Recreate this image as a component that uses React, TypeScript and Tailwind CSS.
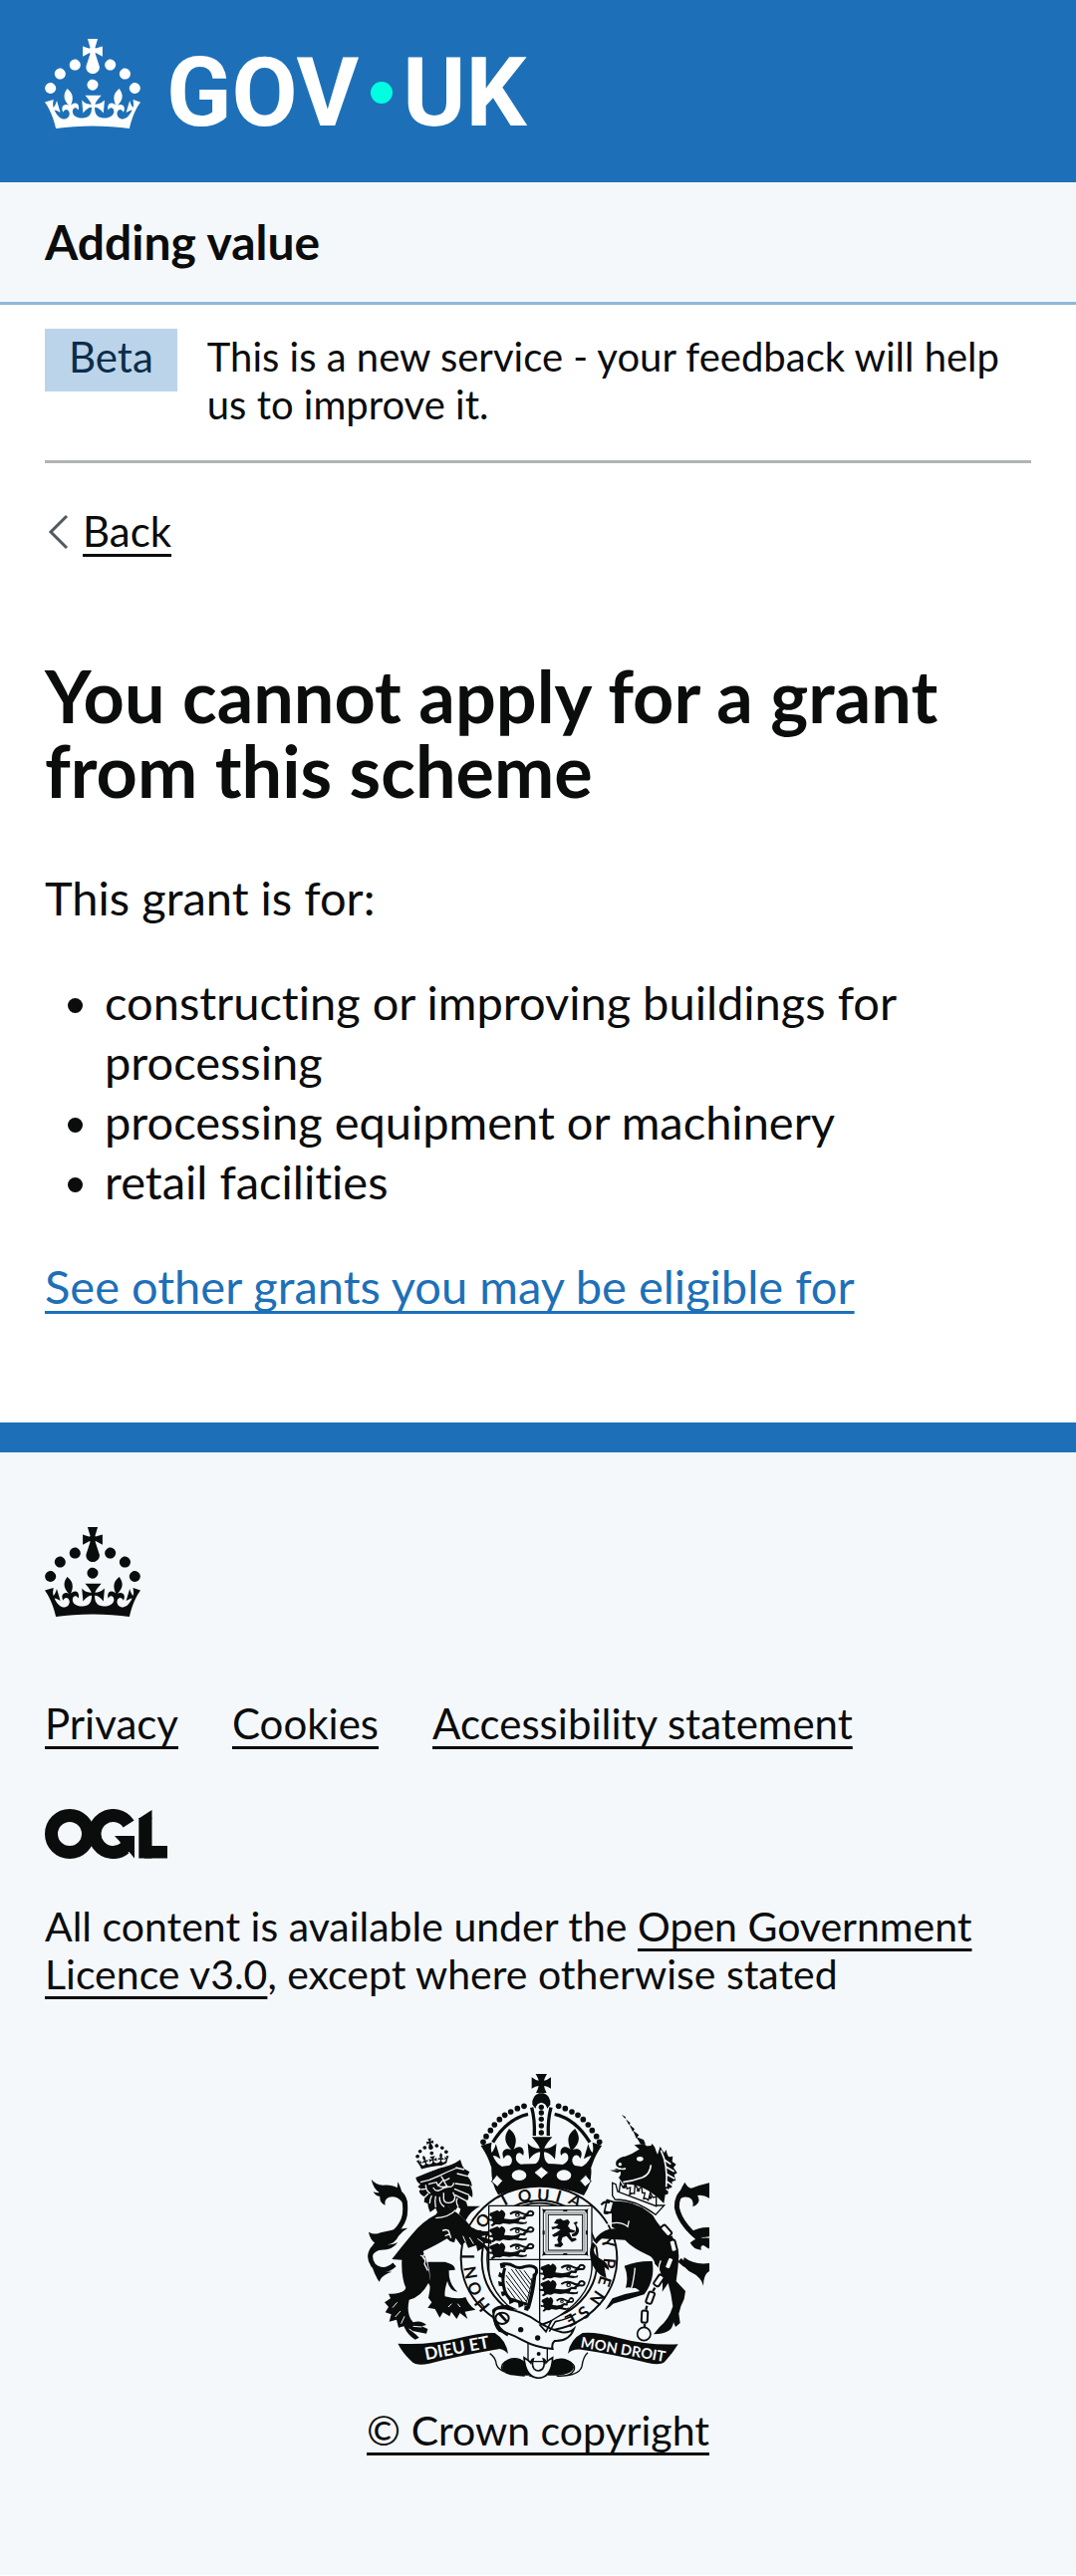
import type { ReactNode } from "react";

const CROWN_BASE =
  "M16 29.2c4.4 0 8.6.3 12.3.8 1.1-4.5 2.4-7 3.7-8.8l-2.5-.9c.2 1.3.3 1.9 0 2.7-.4-.4-.8-1.1-1.1-2.3l-1.2 4c.7-.5 1.3-.8 2-.9-1.1 2.5-2.6 3.1-3.5 3-1.1-.2-1.7-1.2-1.5-2.1.3-1.2 1.5-1.5 2.1-.1 1.1-2.3-.8-3-2-2.3 1.9-1.9 2.1-3.5.6-5.6-2.1 1.6-2.1 3.2-1.2 5.5-1.2-1.4-3.2-.6-2.5 1.6.9-1.4 2.1-.5 1.9.8-.2 1.1-1.7 2.1-3.5 1.9-2.7-.2-2.9-2.1-2.9-3.6.7-.1 1.9.5 2.9 1.9l.4-4.3c-1.1 1.1-2.1 1.4-3.2 1.4.4-1.2 2.1-3 2.1-3h-5.4s1.7 1.9 2.1 3c-1.1 0-2.1-.2-3.2-1.4l.4 4.3c1-1.4 2.2-2 2.9-1.9-.1 1.5-.2 3.4-2.9 3.6-1.9.2-3.4-.8-3.5-1.9-.2-1.3 1-2.2 1.9-.8.7-2.3-1.2-3-2.5-1.6.9-2.2.9-3.9-1.2-5.5-1.5 2-1.3 3.7.6 5.6-1.2-.7-3.1 0-2 2.3.6-1.4 1.8-1.1 2.1.1.2.9-.3 1.9-1.5 2.1-.9.2-2.4-.5-3.5-3 .6 0 1.2.3 2 .9l-1.2-4c-.3 1.1-.7 1.9-1.1 2.3-.3-.8-.2-1.4 0-2.7l-2.9.9C1.3 23 2.6 25.5 3.7 30c3.7-.5 7.9-.8 12.3-.8z";
const CROWN_TOP =
  "M22.6 10.4c-1 .4-2-.1-2.4-1-.4-.9.1-2 1-2.4.9-.4 2 .1 2.4 1s-.1 2-1 2.4m-5.9 6.7c-.9.4-2-.1-2.4-1-.4-.9.1-2 1-2.4.9-.4 2 .1 2.4 1s-.1 2-1 2.4m10.8-3.7c-1 .4-2-.1-2.4-1-.4-.9.1-2 1-2.4.9-.4 2 .1 2.4 1s0 2-1 2.4m3.3 4.8c-1 .4-2-.1-2.4-1-.4-.9.1-2 1-2.4.9-.4 2 .1 2.4 1s-.1 2-1 2.4M17 4.7l2.3 1.2V2.5l-2.3.7-.2-.2.9-3h-3.4l.9 3-.2.2c-.1.1-2.3-.7-2.3-.7v3.4L15 4.7c.1.1.1.2.2.2l-1.3 4c-.1.2-.1.4-.1.6 0 1.1.8 2 1.9 2.2h.7c1-.2 1.9-1.1 1.9-2.1 0-.2 0-.4-.1-.6l-1.3-4c-.1-.2 0-.2.1-.3m-7.6 5.7c.9.4 2-.1 2.4-1 .4-.9-.1-2-1-2.4-.9-.4-2 .1-2.4 1s0 2 1 2.4m-5 3c.9.4 2-.1 2.4-1 .4-.9-.1-2-1-2.4-.9-.4-2 .1-2.4 1s.1 2 1 2.4m-3.2 4.8c.9.4 2-.1 2.4-1 .4-.9-.1-2-1-2.4-.9-.4-2 .1-2.4 1s0 2 1 2.4";

function Crown() {
  return (
    <svg viewBox="0 0 32 30" className="block h-[90px] w-[96px]" fill="currentColor" aria-hidden="true">
      <path d={CROWN_TOP} />
      <path d={CROWN_BASE} />
    </svg>
  );
}

function LicenceLogo() {
  return (
    <svg viewBox="0 0 123 50" className="block h-[50px] w-[123px]" fill="currentColor" role="img" aria-label="OGL">
      <g fill="none" stroke="currentColor" strokeWidth="13">
        <circle cx="25" cy="25" r="18.5" />
        <path d="M84.1 15a18.5 18.5 0 1 0-3.9 24.4" />
      </g>
      <path d="M70 27h20v22.5l-5.5-6.5-6 3-2-9-1-4z" />
      <path d="M94.3 9.5 107.5 1v9H94.3z" />
      <rect x="94.3" y="9" width="13.2" height="40.5" />
      <rect x="100" y="37" width="23" height="12.5" />
    </svg>
  );
}

const INK = "#0b0c0c";
const PAPER = "#f4f8fb";

const ARCH_PEARLS: [number, number][] = [
  [52, 163], [72, 170], [92, 180], [110, 190], [126, 203], [141, 219], [153, 236], [166, 254], [175, 271],
];

const MOTTO: [string, number, number, number][] = [
  ["H", 402, 760, -130], ["O", 380, 712, -115], ["N", 368, 664, -100], ["I", 362, 616, -90],
  ["S", 386, 546, -68], ["O", 405, 508, -56], ["T", 468, 445, -28],
  ["Q", 530, 434, -12], ["U", 586, 432, 4], ["I", 632, 436, 16], ["A", 682, 448, 30],
  ["Y", 780, 574, 74], ["P", 784, 636, 94], ["E", 770, 690, 108], ["N", 748, 740, 124],
  ["S", 708, 784, 140], ["E", 668, 806, 152],
];

const BELT_PATH =
  "M436 790q2-22 30-18 60 8 100 38 40 26 76 34 22 2 36-10-14 38-58 36-10 8-6 24-50-4-90-26-40-22-70-28-16-16-18-50z";

function PassantLion({ x, y }: { x: number; y: number }) {
  return (
    <g transform={`translate(${x} ${y})`}>
      <path d="M12-2l6 5 6-6 8 5 4 8-4 14 20 2q18 0 28-8l18 2-3 6-14-1-6 8 18 2 8-3-2 7-14 2-22-3-16 2-18-2-10 4-12-1-10 6-6-3 8-7-2-6-12-1-3-6 12 1 1-6-8-6 2-6z" />
      <path d="M50 10q16-12 34-3t22-4q8-5 14 3 0 10-12 8-8-1-18 5" fill="none" stroke={INK} strokeWidth="6" />
      <circle cx="72" cy="12" r="7" />
      <circle cx="72" cy="13" r="3" fill={PAPER} />
    </g>
  );
}

function ChainLink({ x, y, r }: { x: number; y: number; r: number }) {
  return (
    <g transform={`translate(${x} ${y}) rotate(${r})`}>
      <rect x="-9" y="-18" width="18" height="36" rx="6" fill={PAPER} stroke={INK} strokeWidth="6" />
    </g>
  );
}

function Garter() {
  return (
    <g>
      <ellipse cx="573" cy="622" rx="235" ry="218" fill={PAPER} stroke={INK} strokeWidth="6" />
      <ellipse cx="575" cy="625" rx="174" ry="178" fill={PAPER} stroke={INK} strokeWidth="6" />
      <ellipse cx="575" cy="625" rx="158" ry="170" fill="none" stroke={INK} strokeWidth="5" />
      {MOTTO.map(([ch, x, y, r]) => (
        <g key={ch + x} transform={`translate(${x} ${y}) rotate(${r})`}>
          <text y="17" textAnchor="middle" fontSize="50" fontFamily="Lato, sans-serif" fontWeight="700">
            {ch}
          </text>
        </g>
      ))}
    </g>
  );
}

function Shield() {
  return (
    <g>
      <path
        d="M422 463h310v190q-6 104-157 174Q424 752 422 650z"
        fill={PAPER}
        stroke={INK}
        strokeWidth="4"
      />
      <path d="M575 463v362M422 625h310" stroke={INK} strokeWidth="4" />
      <PassantLion x={436} y={478} />
      <PassantLion x={436} y={527} />
      <PassantLion x={436} y={577} />
      <PassantLion x={590} y={640} />
      <PassantLion x={590} y={689} />
      <g transform="translate(590 740) scale(.72 .9)">
        <PassantLion x={0} y={0} />
      </g>
      <g fill="none" stroke={INK}>
        <rect x="586" y="476" width="132" height="134" strokeWidth="3" />
        <rect x="594" y="484" width="116" height="118" stroke="#a9adb0" strokeWidth="6" />
        <rect x="601" y="490" width="103" height="107" strokeWidth="3" />
      </g>
      <path d="M582 472l12 4-6 10zM722 472l-12 4 6 10zM582 614l12-4-6-10zM722 614l-12-4 6-10zM646 474h12v6h-12zM646 606h12v6h-12zM584 538h6v12h-6zM714 538h6v12h-6z" />
      <path d="M626 504l12-2 8 6 14-4 6 8-6 12 8 10 14 4-4 6-14 0 8 16 12 0 2 6-14 6-6-6-10-12-12 4-4 12 6 10-8 8-18-2 0-7 12-2-4-12 4-12-14 4-6-6 14-8 12-8-14-4-10 4-4-8 14-2 8-6-14-4z" />
      <path d="M672 548q14-4 12-18t-8-14q10-10 14-2-10 6 2 16 4 10-2 18-6 10-18 6z" />
      <g fill="none" stroke={INK}>
        <path d="M456 642q24-8 40 2t34 2q24-6 34 6 6 14-8 24" strokeWidth="9" />
        <path d="M470 650q-8 24-4 52t20 42l52 16" strokeWidth="9" />
        <path d="M560 668q-4 50-20 104" strokeWidth="11" />
        <path d="M552 680q-6 50-22 84" strokeWidth="3" />
        <path
          d="M480 662l62 84M490 654l54 74M502 654l44 60M514 656l34 44M528 658l22 30M474 672l60 78M474 690l48 60M478 710l30 42"
          strokeWidth="3"
        />
      </g>
      <path d="M454 662l12 8-2 12-14-6zM450 690l14 4 2 12-14-2zM458 722l14-2 6 10-16 6zM482 744l14-2 4 10-16 8zM510 756l14-4 2 12-14 6zM456 636l14-2 2 14-14 4zM530 764l16 2-6 14-12-4z" />
    </g>
  );
}

function Belt() {
  return (
    <g>
      <path
        d="M425 908q18 12 20 34 10 28 85 33l-8-4q-50 6-62-20 0-18 30-27 24-4 36 10l18 41q24 10 50 0l20-42q20-14 44-4 28 12 20 30-12 20-52 16 66 2 76-28 4-30 18-42"
        fill={PAPER}
        stroke={INK}
        strokeWidth="4"
      />
      <path d="M462 950q2-22 34-26 22-2 32 8l14 42q-74 2-80-24zM678 950q-2-22-34-26-22-2-32 8l-14 42q74 2 80-24z" />
      <path d="M540 876v56h58v-56z" fill={PAPER} stroke={INK} strokeWidth="4" />
      <path
        d="M528 920q14 8 20 16 2-10 8-12-6 20 2 30 12 12 26 0 8-10 2-30 6 2 8 12 8-10 20-16-2 58-42 62-40-2-44-62z"
        fill={PAPER}
        stroke={INK}
        strokeWidth="5"
      />
      <path d={BELT_PATH} fill={PAPER} stroke={INK} strokeWidth="6" />
      <path d="M432 796q0-24 30-24l48 4-30-14q-34-2-48 14z" />
      <path d="M438 800q10 36 42 52" fill="none" stroke={INK} strokeWidth="10" />
      <ellipse cx="462" cy="802" rx="20" ry="17" fill={PAPER} stroke={INK} strokeWidth="6" />
      <path d="M452 786l24 26" stroke={INK} strokeWidth="8" />
      <path d="M576 822l34-12-16 32zM604 842l18-30q40-8 62-24" fill="none" stroke={INK} strokeWidth="5" />
      <circle cx="518" cy="836" r="8" />
      <circle cx="569" cy="861" r="8" />
      <circle cx="572" cy="909" r="6" />
    </g>
  );
}

function RoyalCrown() {
  return (
    <g>
      {ARCH_PEARLS.map(([dx, y]) => (
        <g key={dx}>
          <circle cx={580 - dx} cy={y} r="8.5" />
          <circle cx={580 + dx} cy={y} r="8.5" />
        </g>
      ))}
      <path d="M540 187Q476 202 434 272M620 187Q684 202 726 272" fill="none" stroke={INK} strokeWidth="10" />
      <path d="M563 66h34q-8 14-9 20 10-1 21-10v34q-11-8-21-8 1 8 8 21h-32q7-13 8-21-10 0-21 8V76q11 9 21 10-1-6-9-20z" />
      <path d="M553 158q-2-26 20-34h14q22 8 20 34l-9 12q-4-16-18-18-14 2-18 18z" />
      <path d="M546 168l10-2q10 40 8 86h-10q2-50-8-84zM614 168l-10-2q-10 40-8 86h10q-2-50 8-84z" />
      {[166, 183, 202, 222, 243].map((y) => (
        <circle key={y} cx="580" cy={y} r="8" />
      ))}
      <g transform="translate(397.6 40.5) scale(11.4)">
        <path d={CROWN_BASE} />
      </g>
      <path d="M430 350Q580 322 730 350q4 44-22 82-128-54-258-2-22-36-20-80z" />
      <path
        d="M580 345l22 18-22 19-22-19zM446 370l18 18-16 18-18-16zM714 370l-18 18 16 18 18-16z"
        fill={PAPER}
        stroke={INK}
        strokeWidth="3"
      />
      <ellipse cx="513" cy="371" rx="22" ry="16" fill={PAPER} />
      <ellipse cx="648" cy="371" rx="22" ry="16" fill={PAPER} />
    </g>
  );
}

function LionSupporter() {
  return (
    <g>
      <path d="M340 464h56q-30 14-44 44l-20-20z" />
      <path d="M138 640q-34 30-64 2-28-40 30-76 66-36 66-90 2-46-24-54" fill="none" stroke={INK} strokeWidth="15" />
      <path d="M68 383q12 16 36 18 26-2 42 8l2-18q10 20 12 32 20 20 16 44l-22-22q-12-12-32-8-16 6-12 24-18-8-16-26-14-2-20-14 12 4 18 2-18-12-24-40zM60 542q18 10 36 2 42-12 82-14-18 10-28 24-10 22-34 26 20 0 32-8-14 24-50 24-14 0-26 14-6-20 6-36-14-10-18-32zM70 646q18 16 60 16-30 8-38 30-12-16-22-46z" />
      <path d="M262 490q-40 20-74 62-30 36-58 72l30 2q-2 54 12 84-6 18-52 18l6 14-18 12 12 14-10 16 18 6-6 22 22-6 6 24 16-4q12 28 34 40l12-6-20-20 42 8 4-14-18-8 14-4q-16-16-40-8-22-24-12-68 36-8 58-50l8 14q-4-58-24-110 32-14 72-38 8 10 22 12l4-14 16 22 14-10 8 18 24-8 4 18 20-12 10 16 4-14-20-16 28 4v-12l-34-12 28-2-2-12q-30 2-52-12-28-36-60-54l-22-18z" />
      <path d="M238 632h52q32 8 30 24l-18 2q-2 40 26 64-24-2-31-32-10 30-7 46 40 10 62 2 10 26 30 38l-32 6 8 22-23-18-10 18-16-22-5 14-20-12-10 16-14-26-22-4 12-16-10-14q12-50-2-108z" />
      <path d="M202 378Q240 362 270 350Q310 344 336 324L342 342L348 352L364 361L357 374Q370 386 371 404L366 402Q376 422 372 438L360 428Q362 442 358 446L352 446L358 464L346 480L328 466L318 484L298 464L290 498Q276 496 268 486L262 470L245 482Q238 468 238 456L227 452L229 436Q214 430 212 418L219 413L208 406L216 398Q204 392 202 378Z" />
      <path
        d="M216 392q26-4 54-18t58-26M240 398l24-6 6 12M278 374l10 14 16-8M284 386l-14 16q10 8 26 2l-10-16M254 408q10 16 24 6t28-8q10-2 10-12M286 424v18q2 14 18 12t16-18l-6-14M232 400q0 20 14 26M320 396l44 6M318 412l44 18M320 430l34 18M326 366l32 8M322 348l26 6M232 412l-14 2M240 426l-12 12M250 432q-6 12-6 24M262 434q-4 16 0 34M274 436q-2 20 14 30M328 440q-8 10 2 26M262 500q40-2 60-24M282 538q20-8 22 10l-14 6M300 536l8 24M216 612q20 8 12 26l10 20M240 604q-24 8-12 20"
        fill="none"
        stroke={PAPER}
        strokeWidth="4"
      />
      <path
        d="M352 572l-8-18M376 578l-12-20M404 574l-16-12M132 770l14-16M140 798l16-18M158 818l10-22M202 848l-20-14M220 828l-26-2M300 768l10-10M336 768l-8-10"
        fill="none"
        stroke={PAPER}
        strokeWidth="3"
      />
      <g transform="translate(194 268) rotate(-9) scale(3.1 2.9)">
        <path d={CROWN_TOP} />
        <path d={CROWN_BASE} />
      </g>
      <path d="M214 364q46-6 90-32" fill="none" stroke={PAPER} strokeWidth="4" />
    </g>
  );
}

function UnicornSupporter() {
  return (
    <g>
      <path d="M822 188l12 8-2 5zM834 202l14 12-4 6zM845 218l16 14-6 8zM856 236l18 14-8 10zM866 256l22 8 6 14-16-2z" />
      <path d="M860 280l28-4 24 18-4 10-22-2z" />
      <path d="M912 276q10 6 14 24l4 8 8-24q6 12 12 20l6-10q2 16 8 22l12-2-2 16 12 8-8 10 11 16-9 6 5 16-11 4-1 18-9 2-3 18-8 2-4 26q-30-32-70-50-30-10-52-8l-14-20q10-10 4-20l-18-6 22-2q-20-2-16-20 8-14 28-16 20-6 40-20 20-12 38-12z" />
      <path
        d="M940 296q22 44 16 110M950 324l20 14M956 346l24 14M958 368l24 14M958 390l20 14M956 412l14 10M826 392q30-4 58-14 24-10 26-38M806 348q16 8 28 2"
        fill="none"
        stroke={PAPER}
        strokeWidth="5"
      />
      <ellipse cx="877" cy="322" rx="10" ry="7" fill={PAPER} />
      <circle cx="817" cy="338" r="5" fill={PAPER} />
      <path d="M786 356l40-2-16 10z" />
      <path d="M794 394l10 4 6 22q60 0 116 42l24 0-26 28q-60-46-122-46l-8-12z" fill={PAPER} stroke={INK} strokeWidth="4" />
      <path d="M814 422l4-28 8 14 8-12 4 16 10-4-2 22q8-6 14-4l2-26 10 14 10-8 2 18 8 0-4 18q8-2 14 4l6-22 8 14 10-2 0 28z" fill={PAPER} stroke={INK} strokeWidth="4" />
      <circle cx="830" cy="406" r="5" />
      <circle cx="872" cy="416" r="5" />
      <circle cx="908" cy="438" r="5" />
      <path d="M792 450q64-6 112 32l12 10q16 30 40 50 38 34 38 72-2 40-8 76l28 30-4 24q-12 22-16 44l4 28-14 12-6-14q-4 36-60 36l18-22q28-22 40-62-4-36-14-70l-18 26q6-60-22-84-4-20-20-26-48-22-70-46l-70-4q-20 16-24 34 2 18 22 28 22 10 24 34l-14-10 6 34q-40-18-48-62-8-36 20-64 24-26 56-24-12-4-12-8z" />
      <path d="M830 644q40-16 84-14 10 54-24 100-58 18-94 28-10 12-24 18l22-34q40-16 82-22-14-14-22-8-10-6-20-2 10-34-4-66z" />
      <path d="M850 716q8-24 12-66M776 520q40-14 64 6l4-18M940 628q-10 20-4 40M736 570l28 30" fill="none" stroke={PAPER} strokeWidth="4" />
      <path d="M778 446l20 6-8 32-20-4z" fill={PAPER} stroke={INK} strokeWidth="5" />
      <path d="M760 460q12-14 26-6M768 484q14 6 26-6" fill="none" stroke={INK} strokeWidth="6" />
      <path d="M1088 586Q1000 530 988 468q0-38 22-50M996 626q40 40 92 26M1040 574q20-12 48 12" fill="none" stroke={INK} strokeWidth="15" />
      <path d="M1012 392q8 16 20 18 28-10 54-16v46q-20-12-36-8 14 22-14 34 4-22-12-28-18-6-28 8-10-12 16-54zM1086 528q-30-2-58 14 14 4 20 14 14 4 38 0zM1086 560q-34-4-58 14 10 22 34 22-8-20 24-12zM1010 618q30 24 76 18v24q-18 10-18 44-8-28-32-38-34-14-26-48z" />
      <ChainLink x={956} y={538} r={-42} />
      <ChainLink x={977} y={584} r={-14} />
      <ChainLink x={965} y={636} r={22} />
      <ChainLink x={934} y={688} r={34} />
      <ChainLink x={908} y={740} r={20} />
      <ChainLink x={891} y={797} r={3} />
      <circle cx="889" cy="849" r="20" fill={PAPER} stroke={INK} strokeWidth="5" />
      <path d="M970 554l6 12M974 606l-4 10M952 658l-6 10M922 710l-6 10M898 764l-3 12M891 818v10" stroke={INK} strokeWidth="7" />
    </g>
  );
}

function MottoRibbons() {
  return (
    <g>
      <path d="M148 878q92 6 182-16 70-18 110-16 35 22 40 64-8-12-25-16-120 20-212 44-40 8-53-6-28-26-42-54z" />
      <path d="M992 880q-92 4-182-20-66-18-106-14-38 20-44 62 14-14 40-12 100 14 200 40 42 10 54-6 22-24 38-50z" />
      <g fill={PAPER} fontFamily="Lato, sans-serif" fontWeight="700" textAnchor="middle">
        <g transform="translate(329 909) rotate(-11)">
          <text fontSize="52">DIEU ET</text>
        </g>
        <g transform="translate(824 911) rotate(10)">
          <text fontSize="44">MON DROIT</text>
        </g>
      </g>
    </g>
  );
}

function RoyalArms() {
  return (
    <svg viewBox="54 66 1032 918" className="block h-[306px] w-[344px]" fill={INK} aria-hidden="true">
      <Garter />
      <Shield />
      <RoyalCrown />
      <UnicornSupporter />
      <LionSupporter />
      <Belt />
      <MottoRibbons />
    </svg>
  );
}

function TextLink({ children }: { children: ReactNode }) {
  return (
    <a href="#" className="underline decoration-[3px] underline-offset-[7px] [text-decoration-skip-ink:none]">
      {children}
    </a>
  );
}

export default function App() {
  return (
    <div className="bg-[#f4f8fb] font-[Lato,sans-serif] text-[41px] leading-12 text-[#0b0c0c] [font-variant-ligatures:none]">
      <header>
        <div className="bg-[#1d70b8] px-[45px] pt-[39px] pb-[54px] text-white">
          <a href="#" aria-label="GOV.UK" className="flex h-[90px] items-center">
            <Crown />
            <span className="flex items-center pt-[18px] pl-[26px] font-[Roboto,sans-serif] text-[96px] leading-[90px] font-bold">
              GOV
              <span className="mr-2.5 ml-3 size-[22px] rounded-full bg-[#00ffe0]" />
              UK
            </span>
          </a>
        </div>
        <div className="border-b-3 border-[#8eb8dc] px-[45px] py-[30px] text-[48px] leading-15 font-bold">
          <a href="#">Adding value</a>
        </div>
      </header>

      <div className="bg-white px-[45px] pb-[107px]">
        <div className="flex items-start gap-[30px] border-b-3 border-[#b1b4b6] pt-6 pb-8 text-[40px]">
          <strong className="bg-[#bbd4ea] px-6 pt-1 pb-[11px] text-[42px] font-normal text-[#0c2d4a]">Beta</strong>
          <p className="flex-1 pt-1">This is a new service - your feedback will help us to improve it.</p>
        </div>

        <nav aria-label="Back" className="mt-11 flex items-center text-[42px]">
          <svg viewBox="0 0 38 48" className="h-12 w-[38px]" fill="none" stroke="#505a5f" strokeWidth="3" aria-hidden="true">
            <path d="M22 9 6 25l16 16" />
          </svg>
          <TextLink>Back</TextLink>
        </nav>

        <main className="pt-[104px] text-[47px] leading-15">
          <h1 className="text-[72px] leading-[75px] font-bold">You cannot apply for a grant from this scheme</h1>
          <p className="mt-15">This grant is for:</p>
          <ul className="mt-[45px] list-disc pl-15">
            <li>constructing or improving buildings for processing</li>
            <li>processing equipment or machinery</li>
            <li>retail facilities</li>
          </ul>
          <p className="mt-[45px] text-[#1d70b8]">
            <TextLink>See other grants you may be eligible for</TextLink>
          </p>
        </main>
      </div>

      <footer className="border-t-[30px] border-[#1d70b8] px-[45px] pt-[75px] pb-[121px]">
        <Crown />
        <ul className="mt-[83px] flex flex-wrap gap-x-[54px] text-[42px]">
          <li><TextLink>Privacy</TextLink></li>
          <li><TextLink>Cookies</TextLink></li>
          <li><TextLink>Accessibility statement</TextLink></li>
        </ul>
        <div className="mt-[62px]">
          <LicenceLogo />
        </div>
        <p className="mt-11">
          All content is available under the <TextLink>Open Government Licence v3.0</TextLink>, except where otherwise stated
        </p>
        <div className="mt-[76px] flex flex-col items-center gap-7">
          <RoyalArms />
          <TextLink>© Crown copyright</TextLink>
        </div>
      </footer>
    </div>
  );
}
